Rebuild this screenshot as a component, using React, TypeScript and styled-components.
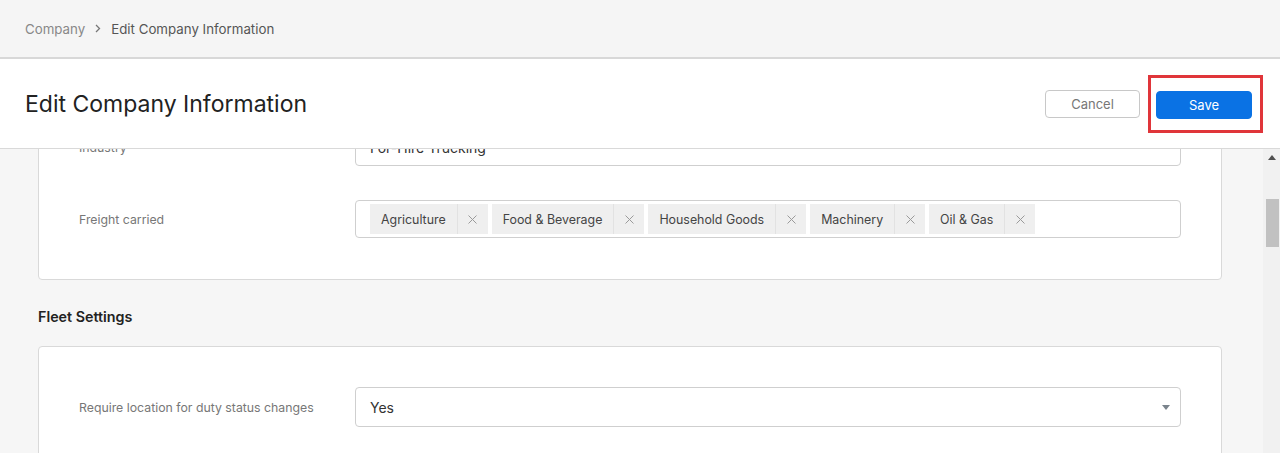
import React from "react";
import styled, { createGlobalStyle } from "styled-components";

const GlobalStyle = createGlobalStyle`
  html, body {
    margin: 0;
    padding: 0;
    height: 100%;
    overflow: hidden;
  }
  body {
    font-family: Inter, "Noto Sans", "Liberation Sans", sans-serif;
    color: #333;
    background: #f6f6f6;
  }
  #root {
    height: 100%;
  }
`;

const Page = styled.div`
  display: flex;
  flex-direction: column;
  height: 100vh;
`;

const Breadcrumbs = styled.nav`
  display: flex;
  align-items: center;
  gap: 9px;
  height: 57px;
  padding: 0 25px;
  background: #f5f5f5;
  border-bottom: 2px solid #d8d8d8;
  flex-shrink: 0;
  font-size: 13.3px;
`;

const Crumb = styled.span<{ $current?: boolean }>`
  color: ${({ $current }) => ($current ? "#555" : "#888")};
`;

const Chevron = styled.span`
  display: flex;
  align-items: center;
  color: #777;
  padding: 0 1px;
`;

const HeaderBar = styled.header`
  display: flex;
  align-items: center;
  justify-content: space-between;
  height: 89px;
  padding: 0 17px 0 25px;
  background: #fff;
  border-bottom: 1px solid #d9d9d9;
  flex-shrink: 0;
`;

const Title = styled.h1`
  margin: 0;
  font-size: 23px;
  font-weight: 400;
  color: #222;
`;

const Actions = styled.div`
  display: flex;
  align-items: center;
  gap: 8px;
`;

const Button = styled.button<{ $primary?: boolean }>`
  width: ${({ $primary }) => ($primary ? "96px" : "95px")};
  height: 28px;
  border-radius: 4px;
  font-family: inherit;
  font-size: 13px;
  cursor: pointer;
  border: 1px solid ${({ $primary }) => ($primary ? "#0a72e4" : "#c8c8c8")};
  background: ${({ $primary }) => ($primary ? "#0a72e4" : "#fff")};
  color: ${({ $primary }) => ($primary ? "#fff" : "#777")};
`;

const Highlight = styled.div`
  display: flex;
  padding: 13px 8px 11px 5px;
  border: 3px solid #e0353a;
`;

const Body = styled.div`
  display: flex;
  flex: 1;
  min-height: 0;
`;

const Viewport = styled.main`
  flex: 1;
  overflow: hidden;
  padding: 0 41px 0 38px;
  background: #f6f6f6;
`;

const ScrollContent = styled.div`
  margin-top: -62px;
  display: flex;
  flex-direction: column;
`;

const Card = styled.section`
  display: flex;
  flex-direction: column;
  gap: 34px;
  padding: 40px 40px 41px 40px;
  background: #fff;
  border: 1px solid #d9d9d9;
  border-radius: 4px;
`;

const SectionTitle = styled.h2`
  margin: 28px 0 21px;
  font-size: 14.3px;
  font-weight: 600;
  color: #222;
`;

const Row = styled.div`
  display: flex;
  align-items: center;
`;

const Label = styled.label`
  width: 276px;
  flex-shrink: 0;
  font-size: 12.3px;
  color: #777;
`;

const Field = styled.div`
  flex: 1;
  display: flex;
  align-items: center;
  gap: 4px;
  height: 38px;
  box-sizing: border-box;
  padding: 0 14px;
  border: 1px solid #cfcfcf;
  border-radius: 4px;
  background: #fff;
  font-size: 14px;
  color: #333;
`;

const SelectField = styled(Field)`
  height: 40px;
  justify-content: space-between;
  padding-right: 10px;
`;

const Tag = styled.span`
  display: flex;
  align-items: stretch;
  height: 30px;
  background: #efefef;
  font-size: 12.4px;
  color: #444;
`;

const TagText = styled.span`
  display: flex;
  align-items: center;
  padding: 0 11px 0 11px;
  border-right: 1px solid #e2e2e2;
`;

const TagRemove = styled.span`
  display: flex;
  align-items: center;
  justify-content: center;
  width: 30px;
  color: #9a9a9a;
`;

const ScrollTrack = styled.div`
  width: 17px;
  flex-shrink: 0;
  display: flex;
  flex-direction: column;
  align-items: center;
  background: #f1f1f1;
`;

const ScrollArrow = styled.div`
  height: 17px;
  display: flex;
  align-items: center;
  justify-content: center;
  color: #505050;
`;

const ScrollThumb = styled.div`
  width: 13px;
  height: 48px;
  margin-top: 33px;
  margin-left: 1px;
  background: #c1c1c1;
`;

const freight = ["Agriculture", "Food & Beverage", "Household Goods", "Machinery", "Oil & Gas"];

function XIcon() {
  return (
    <svg width="9" height="9" viewBox="0 0 9 9">
      <path d="M0.5 0.5 L8.5 8.5 M8.5 0.5 L0.5 8.5" stroke="currentColor" strokeWidth="1" fill="none" />
    </svg>
  );
}

export default function App() {
  return (
    <Page>
      <GlobalStyle />
      <Breadcrumbs>
        <Crumb>Company</Crumb>
        <Chevron>
          <svg width="6" height="9" viewBox="0 0 6 9">
            <path d="M1 1 L4.5 4.5 L1 8" stroke="currentColor" strokeWidth="1.3" fill="none" />
          </svg>
        </Chevron>
        <Crumb $current>Edit Company Information</Crumb>
      </Breadcrumbs>
      <HeaderBar>
        <Title>Edit Company Information</Title>
        <Actions>
          <Button>Cancel</Button>
          <Highlight>
            <Button $primary>Save</Button>
          </Highlight>
        </Actions>
      </HeaderBar>
      <Body>
        <Viewport>
          <ScrollContent>
            <Card>
              <Row>
                <Label>Industry</Label>
                <Field>For-Hire Trucking</Field>
              </Row>
              <Row>
                <Label>Freight carried</Label>
                <Field>
                  {freight.map((f) => (
                    <Tag key={f}>
                      <TagText>{f}</TagText>
                      <TagRemove>
                        <XIcon />
                      </TagRemove>
                    </Tag>
                  ))}
                </Field>
              </Row>
            </Card>
            <SectionTitle>Fleet Settings</SectionTitle>
            <Card>
              <Row>
                <Label>Require location for duty status changes</Label>
                <SelectField>
                  <span>Yes</span>
                  <svg width="8" height="5" viewBox="0 0 8 5">
                    <path d="M0 0 H8 L4 5 Z" fill="#7a838c" />
                  </svg>
                </SelectField>
              </Row>
              <Row>
                <Label>Allow drivers to edit logs</Label>
                <SelectField>
                  <span>Yes</span>
                </SelectField>
              </Row>
            </Card>
          </ScrollContent>
        </Viewport>
        <ScrollTrack>
          <ScrollArrow>
            <svg width="8" height="5" viewBox="0 0 8 5">
              <path d="M0 5 H8 L4 0 Z" fill="currentColor" />
            </svg>
          </ScrollArrow>
          <ScrollThumb />
        </ScrollTrack>
      </Body>
    </Page>
  );
}
